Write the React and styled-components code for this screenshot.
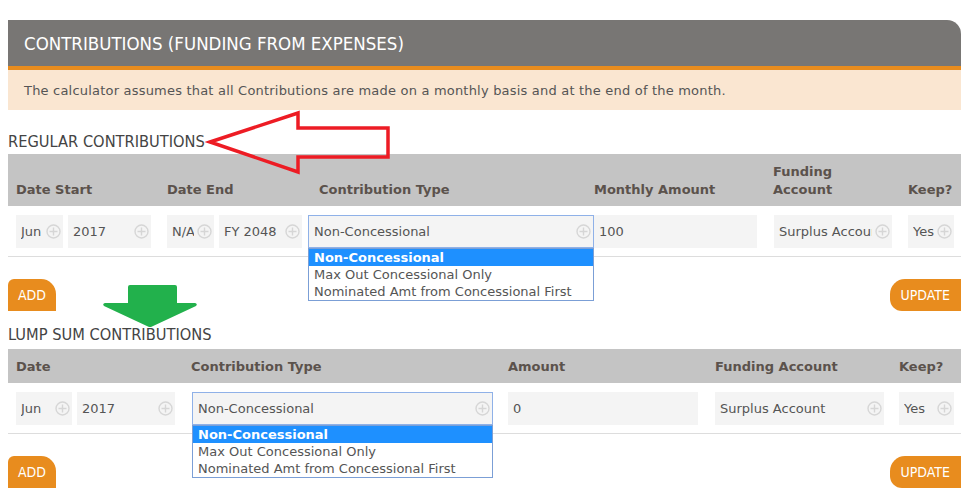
import React from 'react';
import styled, { createGlobalStyle } from 'styled-components';

const GlobalStyle = createGlobalStyle`
  body {
    margin: 8px;
    background: #fff;
    font-family: Verdana, "DejaVu Sans", sans-serif;
    font-size: 13px;
    color: #555;
  }
`;

const Page = styled.div`
  position: relative;
  width: 953px;
  margin-top: 12px;
`;

const PanelTitle = styled.div`
  height: 46px;
  display: flex;
  align-items: center;
  padding: 0 16px;
  background: #787674;
  border-top-right-radius: 14px;
  border-bottom: 4px solid #e88c1e;
  color: #fff;
  font-family: "DejaVu Sans Condensed", "DejaVu Sans", sans-serif;
  font-stretch: condensed;
  font-size: 18.5px;
`;

const Notice = styled.div`
  height: 40px;
  display: flex;
  align-items: center;
  padding: 0 16px;
  background: #fae6d1;
  color: #555;
  font-size: 13px;
  letter-spacing: 0.2px;
`;

const SectionTitle = styled.div`
  margin: ${(p) => p.$top}px 0 ${(p) => p.$bottom}px;
  line-height: 20px;
  color: #444;
  font-family: "DejaVu Sans Condensed", "DejaVu Sans", sans-serif;
  font-stretch: condensed;
  font-size: 16.3px;
`;

const HeadRow = styled.div`
  display: grid;
  grid-template-columns: ${(p) => p.$cols};
  align-items: end;
  min-height: ${(p) => p.$h}px;
  background: #c4c4c4;
`;

const HeadCell = styled.div`
  padding: 8px 4px 7px ${(p) => p.$pad ?? 8}px;
  line-height: 18px;
  font-weight: bold;
  color: #5b524c;
`;

const BodyRow = styled.div`
  display: grid;
  grid-template-columns: ${(p) => p.$cols};
  padding: 9px 0 8px;
  border-bottom: 1px solid #ddd;
`;

const Cell = styled.div`
  display: flex;
  gap: 5px;
  padding-left: ${(p) => p.$pad ?? 8}px;
`;

const Field = styled.div`
  position: relative;
  box-sizing: border-box;
  width: ${(p) => p.$w}px;
  height: 33px;
  display: flex;
  align-items: center;
  gap: 3px;
  padding: 0 2px 0 5px;
  background: #f4f4f4;
  border: ${(p) => (p.$focus ? '1px solid #8fb1e8' : 'none')};
  color: #555;
  font-size: 13px;
`;

const FieldText = styled.span`
  flex: 1;
  min-width: 0;
  overflow: hidden;
  white-space: nowrap;
`;

const ListBox = styled.div`
  position: absolute;
  z-index: 2;
  left: -1px;
  right: -1px;
  top: 32px;
  background: #fff;
  border: 1px solid #7b9fd6;
`;

const Option = styled.div`
  height: 17px;
  line-height: 17px;
  padding: 0 5px;
  white-space: nowrap;
  background: ${(p) => (p.$active ? '#1e90ff' : '#fff')};
  color: ${(p) => (p.$active ? '#fff' : '#555')};
  font-weight: ${(p) => (p.$active ? 'bold' : 'normal')};
`;

const ButtonBar = styled.div`
  display: flex;
  justify-content: space-between;
  margin-top: 22px;
`;

const Button = styled.button`
  height: 32px;
  padding: 0 ${(p) => (p.$right ? 11 : 10)}px;
  border: none;
  background: #e88c1e;
  color: #fff;
  font-family: "DejaVu Sans Condensed", "DejaVu Sans", sans-serif;
  font-stretch: condensed;
  font-size: 14px;
  border-radius: ${(p) => (p.$right ? '15px 0 0 12px' : '6px 15px 0 0')};
  cursor: pointer;
`;

const Arrow = styled.svg`
  position: absolute;
  left: ${(p) => p.$x}px;
  top: ${(p) => p.$y}px;
  pointer-events: none;
  overflow: visible;
`;

const PlusIcon = () => (
  <svg width="15" height="15" viewBox="0 0 15 15" style={{ flex: 'none' }}>
    <circle cx="7.5" cy="7.5" r="6.5" fill="none" stroke="#d6d6d6" strokeWidth="1.4" />
    <path d="M7.5 3.5v8M3.5 7.5h8" stroke="#d6d6d6" strokeWidth="1.4" />
  </svg>
);

const OPTIONS = [
  'Non-Concessional',
  'Max Out Concessional Only',
  'Nominated Amt from Concessional First',
];

function Select({ w, value, icon = true, open }) {
  return (
    <Field $w={w} $focus={open}>
      <FieldText>{value}</FieldText>
      {icon && <PlusIcon />}
      {open && (
        <ListBox>
          {OPTIONS.map((o, i) => (
            <Option key={o} $active={i === 0}>
              {o}
            </Option>
          ))}
        </ListBox>
      )}
    </Field>
  );
}

const REG_COLS = '151px 149px 286px 172px 134px 61px';
const LUMP_COLS = '176px 316px 207px 184px 70px';

export default function App() {
  return (
    <Page>
      <GlobalStyle />
      <PanelTitle>CONTRIBUTIONS (FUNDING FROM EXPENSES)</PanelTitle>
      <Notice>
        The calculator assumes that all Contributions are made on a monthly basis and at the end of the month.
      </Notice>

      <SectionTitle $top={22} $bottom={2}>REGULAR CONTRIBUTIONS</SectionTitle>
      <HeadRow $cols={REG_COLS} $h={52}>
        <HeadCell>Date Start</HeadCell>
        <HeadCell>Date End</HeadCell>
        <HeadCell $pad={11}>Contribution Type</HeadCell>
        <HeadCell $pad={0}>Monthly Amount</HeadCell>
        <HeadCell $pad={7}>
          Funding
          <br />
          Account
        </HeadCell>
        <HeadCell>Keep?</HeadCell>
      </HeadRow>
      <BodyRow $cols={REG_COLS}>
        <Cell>
          <Select w={47} value="Jun" />
          <Select w={83} value="2017" />
        </Cell>
        <Cell>
          <Select w={47} value="N/A" />
          <Select w={83} value="FY 2048" />
        </Cell>
        <Cell $pad={0}>
          <Select w={286} value="Non-Concessional" open />
        </Cell>
        <Cell $pad={0}>
          <Select w={163} value="100" icon={false} />
        </Cell>
        <Cell>
          <Select w={118} value="Surplus Account" />
        </Cell>
        <Cell>
          <Select w={46} value="Yes" />
        </Cell>
      </BodyRow>
      <ButtonBar>
        <Button>ADD</Button>
        <Button $right>UPDATE</Button>
      </ButtonBar>

      <SectionTitle $top={14} $bottom={4}>LUMP SUM CONTRIBUTIONS</SectionTitle>
      <HeadRow $cols={LUMP_COLS} $h={34}>
        <HeadCell>Date</HeadCell>
        <HeadCell $pad={7}>Contribution Type</HeadCell>
        <HeadCell>Amount</HeadCell>
        <HeadCell>Funding Account</HeadCell>
        <HeadCell>Keep?</HeadCell>
      </HeadRow>
      <BodyRow $cols={LUMP_COLS}>
        <Cell>
          <Select w={56} value="Jun" />
          <Select w={98} value="2017" />
        </Cell>
        <Cell>
          <Select w={301} value="Non-Concessional" open />
        </Cell>
        <Cell>
          <Select w={190} value="0" icon={false} />
        </Cell>
        <Cell>
          <Select w={169} value="Surplus Account" />
        </Cell>
        <Cell>
          <Select w={55} value="Yes" />
        </Cell>
      </BodyRow>
      <ButtonBar>
        <Button>ADD</Button>
        <Button $right>UPDATE</Button>
      </ButtonBar>

      <Arrow $x={202} $y={93} width="180" height="60" viewBox="0 0 180 60">
        <path
          d="M0 29 L88 0 L88 15 L178 15 L178 44 L88 44 L88 59 Z"
          fill="none"
          stroke="#ed1c24"
          strokeWidth="3.5"
          strokeLinejoin="miter"
        />
      </Arrow>
      <Arrow $x={95} $y={265} width="94" height="42" viewBox="0 0 94 42">
        <path
          d="M25 2 Q25 0 27 0 L72 0 Q74 0 74 2 L74 18 L92 18 Q95 19 93 21 L48 42 L46 42 L1 21 Q-1 19 2 18 L25 18 Z"
          fill="#22b14c"
        />
      </Arrow>
    </Page>
  );
}
